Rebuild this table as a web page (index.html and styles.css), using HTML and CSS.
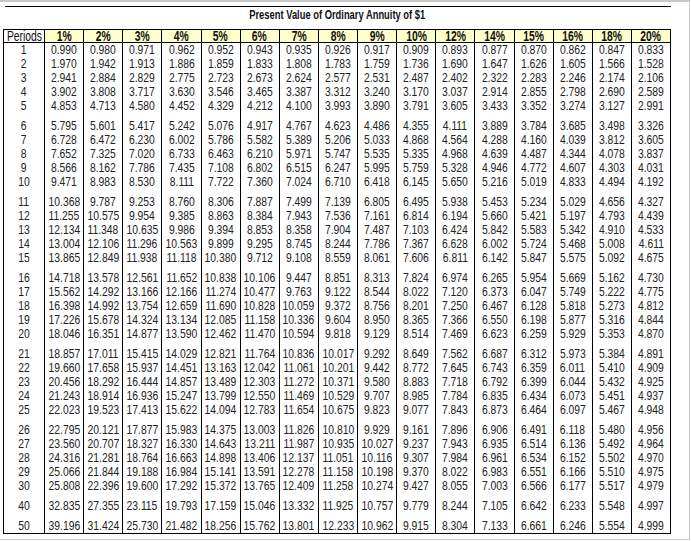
FILE: index.html
```html
<!DOCTYPE html>
<html>
<head>
<meta charset="utf-8">
<link rel="stylesheet" href="styles.css">
</head>
<body>
<div class="frame">
  <div class="rule"></div>
  <div class="title"><span>Present Value of Ordinary Annuity of $1</span></div>
  <table class="pv">
    <colgroup><col class="c-per"><col span="16"></colgroup>
    <thead>
      <tr><th class="per"><span>Periods</span></th><th><span>1%</span></th><th><span>2%</span></th><th><span>3%</span></th><th><span>4%</span></th><th><span>5%</span></th><th><span>6%</span></th><th><span>7%</span></th><th><span>8%</span></th><th><span>9%</span></th><th><span>10%</span></th><th><span>12%</span></th><th><span>14%</span></th><th><span>15%</span></th><th><span>16%</span></th><th><span>18%</span></th><th><span>20%</span></th></tr>
    </thead>
    <tbody>
      <tr><td><span>1</span></td><td><span>0.990</span></td><td><span>0.980</span></td><td><span>0.971</span></td><td><span>0.962</span></td><td><span>0.952</span></td><td><span>0.943</span></td><td><span>0.935</span></td><td><span>0.926</span></td><td><span>0.917</span></td><td><span>0.909</span></td><td><span>0.893</span></td><td><span>0.877</span></td><td><span>0.870</span></td><td><span>0.862</span></td><td><span>0.847</span></td><td><span>0.833</span></td></tr>
      <tr><td><span>2</span></td><td><span>1.970</span></td><td><span>1.942</span></td><td><span>1.913</span></td><td><span>1.886</span></td><td><span>1.859</span></td><td><span>1.833</span></td><td><span>1.808</span></td><td><span>1.783</span></td><td><span>1.759</span></td><td><span>1.736</span></td><td><span>1.690</span></td><td><span>1.647</span></td><td><span>1.626</span></td><td><span>1.605</span></td><td><span>1.566</span></td><td><span>1.528</span></td></tr>
      <tr><td><span>3</span></td><td><span>2.941</span></td><td><span>2.884</span></td><td><span>2.829</span></td><td><span>2.775</span></td><td><span>2.723</span></td><td><span>2.673</span></td><td><span>2.624</span></td><td><span>2.577</span></td><td><span>2.531</span></td><td><span>2.487</span></td><td><span>2.402</span></td><td><span>2.322</span></td><td><span>2.283</span></td><td><span>2.246</span></td><td><span>2.174</span></td><td><span>2.106</span></td></tr>
      <tr><td><span>4</span></td><td><span>3.902</span></td><td><span>3.808</span></td><td><span>3.717</span></td><td><span>3.630</span></td><td><span>3.546</span></td><td><span>3.465</span></td><td><span>3.387</span></td><td><span>3.312</span></td><td><span>3.240</span></td><td><span>3.170</span></td><td><span>3.037</span></td><td><span>2.914</span></td><td><span>2.855</span></td><td><span>2.798</span></td><td><span>2.690</span></td><td><span>2.589</span></td></tr>
      <tr><td><span>5</span></td><td><span>4.853</span></td><td><span>4.713</span></td><td><span>4.580</span></td><td><span>4.452</span></td><td><span>4.329</span></td><td><span>4.212</span></td><td><span>4.100</span></td><td><span>3.993</span></td><td><span>3.890</span></td><td><span>3.791</span></td><td><span>3.605</span></td><td><span>3.433</span></td><td><span>3.352</span></td><td><span>3.274</span></td><td><span>3.127</span></td><td><span>2.991</span></td></tr>
    </tbody>
    <tbody>
      <tr><td><span>6</span></td><td><span>5.795</span></td><td><span>5.601</span></td><td><span>5.417</span></td><td><span>5.242</span></td><td><span>5.076</span></td><td><span>4.917</span></td><td><span>4.767</span></td><td><span>4.623</span></td><td><span>4.486</span></td><td><span>4.355</span></td><td><span>4.111</span></td><td><span>3.889</span></td><td><span>3.784</span></td><td><span>3.685</span></td><td><span>3.498</span></td><td><span>3.326</span></td></tr>
      <tr><td><span>7</span></td><td><span>6.728</span></td><td><span>6.472</span></td><td><span>6.230</span></td><td><span>6.002</span></td><td><span>5.786</span></td><td><span>5.582</span></td><td><span>5.389</span></td><td><span>5.206</span></td><td><span>5.033</span></td><td><span>4.868</span></td><td><span>4.564</span></td><td><span>4.288</span></td><td><span>4.160</span></td><td><span>4.039</span></td><td><span>3.812</span></td><td><span>3.605</span></td></tr>
      <tr><td><span>8</span></td><td><span>7.652</span></td><td><span>7.325</span></td><td><span>7.020</span></td><td><span>6.733</span></td><td><span>6.463</span></td><td><span>6.210</span></td><td><span>5.971</span></td><td><span>5.747</span></td><td><span>5.535</span></td><td><span>5.335</span></td><td><span>4.968</span></td><td><span>4.639</span></td><td><span>4.487</span></td><td><span>4.344</span></td><td><span>4.078</span></td><td><span>3.837</span></td></tr>
      <tr><td><span>9</span></td><td><span>8.566</span></td><td><span>8.162</span></td><td><span>7.786</span></td><td><span>7.435</span></td><td><span>7.108</span></td><td><span>6.802</span></td><td><span>6.515</span></td><td><span>6.247</span></td><td><span>5.995</span></td><td><span>5.759</span></td><td><span>5.328</span></td><td><span>4.946</span></td><td><span>4.772</span></td><td><span>4.607</span></td><td><span>4.303</span></td><td><span>4.031</span></td></tr>
      <tr><td><span>10</span></td><td><span>9.471</span></td><td><span>8.983</span></td><td><span>8.530</span></td><td><span>8.111</span></td><td><span>7.722</span></td><td><span>7.360</span></td><td><span>7.024</span></td><td><span>6.710</span></td><td><span>6.418</span></td><td><span>6.145</span></td><td><span>5.650</span></td><td><span>5.216</span></td><td><span>5.019</span></td><td><span>4.833</span></td><td><span>4.494</span></td><td><span>4.192</span></td></tr>
    </tbody>
    <tbody>
      <tr><td><span>11</span></td><td><span>10.368</span></td><td><span>9.787</span></td><td><span>9.253</span></td><td><span>8.760</span></td><td><span>8.306</span></td><td><span>7.887</span></td><td><span>7.499</span></td><td><span>7.139</span></td><td><span>6.805</span></td><td><span>6.495</span></td><td><span>5.938</span></td><td><span>5.453</span></td><td><span>5.234</span></td><td><span>5.029</span></td><td><span>4.656</span></td><td><span>4.327</span></td></tr>
      <tr><td><span>12</span></td><td><span>11.255</span></td><td><span>10.575</span></td><td><span>9.954</span></td><td><span>9.385</span></td><td><span>8.863</span></td><td><span>8.384</span></td><td><span>7.943</span></td><td><span>7.536</span></td><td><span>7.161</span></td><td><span>6.814</span></td><td><span>6.194</span></td><td><span>5.660</span></td><td><span>5.421</span></td><td><span>5.197</span></td><td><span>4.793</span></td><td><span>4.439</span></td></tr>
      <tr><td><span>13</span></td><td><span>12.134</span></td><td><span>11.348</span></td><td><span>10.635</span></td><td><span>9.986</span></td><td><span>9.394</span></td><td><span>8.853</span></td><td><span>8.358</span></td><td><span>7.904</span></td><td><span>7.487</span></td><td><span>7.103</span></td><td><span>6.424</span></td><td><span>5.842</span></td><td><span>5.583</span></td><td><span>5.342</span></td><td><span>4.910</span></td><td><span>4.533</span></td></tr>
      <tr><td><span>14</span></td><td><span>13.004</span></td><td><span>12.106</span></td><td><span>11.296</span></td><td><span>10.563</span></td><td><span>9.899</span></td><td><span>9.295</span></td><td><span>8.745</span></td><td><span>8.244</span></td><td><span>7.786</span></td><td><span>7.367</span></td><td><span>6.628</span></td><td><span>6.002</span></td><td><span>5.724</span></td><td><span>5.468</span></td><td><span>5.008</span></td><td><span>4.611</span></td></tr>
      <tr><td><span>15</span></td><td><span>13.865</span></td><td><span>12.849</span></td><td><span>11.938</span></td><td><span>11.118</span></td><td><span>10.380</span></td><td><span>9.712</span></td><td><span>9.108</span></td><td><span>8.559</span></td><td><span>8.061</span></td><td><span>7.606</span></td><td><span>6.811</span></td><td><span>6.142</span></td><td><span>5.847</span></td><td><span>5.575</span></td><td><span>5.092</span></td><td><span>4.675</span></td></tr>
    </tbody>
    <tbody>
      <tr><td><span>16</span></td><td><span>14.718</span></td><td><span>13.578</span></td><td><span>12.561</span></td><td><span>11.652</span></td><td><span>10.838</span></td><td><span>10.106</span></td><td><span>9.447</span></td><td><span>8.851</span></td><td><span>8.313</span></td><td><span>7.824</span></td><td><span>6.974</span></td><td><span>6.265</span></td><td><span>5.954</span></td><td><span>5.669</span></td><td><span>5.162</span></td><td><span>4.730</span></td></tr>
      <tr><td><span>17</span></td><td><span>15.562</span></td><td><span>14.292</span></td><td><span>13.166</span></td><td><span>12.166</span></td><td><span>11.274</span></td><td><span>10.477</span></td><td><span>9.763</span></td><td><span>9.122</span></td><td><span>8.544</span></td><td><span>8.022</span></td><td><span>7.120</span></td><td><span>6.373</span></td><td><span>6.047</span></td><td><span>5.749</span></td><td><span>5.222</span></td><td><span>4.775</span></td></tr>
      <tr><td><span>18</span></td><td><span>16.398</span></td><td><span>14.992</span></td><td><span>13.754</span></td><td><span>12.659</span></td><td><span>11.690</span></td><td><span>10.828</span></td><td><span>10.059</span></td><td><span>9.372</span></td><td><span>8.756</span></td><td><span>8.201</span></td><td><span>7.250</span></td><td><span>6.467</span></td><td><span>6.128</span></td><td><span>5.818</span></td><td><span>5.273</span></td><td><span>4.812</span></td></tr>
      <tr><td><span>19</span></td><td><span>17.226</span></td><td><span>15.678</span></td><td><span>14.324</span></td><td><span>13.134</span></td><td><span>12.085</span></td><td><span>11.158</span></td><td><span>10.336</span></td><td><span>9.604</span></td><td><span>8.950</span></td><td><span>8.365</span></td><td><span>7.366</span></td><td><span>6.550</span></td><td><span>6.198</span></td><td><span>5.877</span></td><td><span>5.316</span></td><td><span>4.844</span></td></tr>
      <tr><td><span>20</span></td><td><span>18.046</span></td><td><span>16.351</span></td><td><span>14.877</span></td><td><span>13.590</span></td><td><span>12.462</span></td><td><span>11.470</span></td><td><span>10.594</span></td><td><span>9.818</span></td><td><span>9.129</span></td><td><span>8.514</span></td><td><span>7.469</span></td><td><span>6.623</span></td><td><span>6.259</span></td><td><span>5.929</span></td><td><span>5.353</span></td><td><span>4.870</span></td></tr>
    </tbody>
    <tbody>
      <tr><td><span>21</span></td><td><span>18.857</span></td><td><span>17.011</span></td><td><span>15.415</span></td><td><span>14.029</span></td><td><span>12.821</span></td><td><span>11.764</span></td><td><span>10.836</span></td><td><span>10.017</span></td><td><span>9.292</span></td><td><span>8.649</span></td><td><span>7.562</span></td><td><span>6.687</span></td><td><span>6.312</span></td><td><span>5.973</span></td><td><span>5.384</span></td><td><span>4.891</span></td></tr>
      <tr><td><span>22</span></td><td><span>19.660</span></td><td><span>17.658</span></td><td><span>15.937</span></td><td><span>14.451</span></td><td><span>13.163</span></td><td><span>12.042</span></td><td><span>11.061</span></td><td><span>10.201</span></td><td><span>9.442</span></td><td><span>8.772</span></td><td><span>7.645</span></td><td><span>6.743</span></td><td><span>6.359</span></td><td><span>6.011</span></td><td><span>5.410</span></td><td><span>4.909</span></td></tr>
      <tr><td><span>23</span></td><td><span>20.456</span></td><td><span>18.292</span></td><td><span>16.444</span></td><td><span>14.857</span></td><td><span>13.489</span></td><td><span>12.303</span></td><td><span>11.272</span></td><td><span>10.371</span></td><td><span>9.580</span></td><td><span>8.883</span></td><td><span>7.718</span></td><td><span>6.792</span></td><td><span>6.399</span></td><td><span>6.044</span></td><td><span>5.432</span></td><td><span>4.925</span></td></tr>
      <tr><td><span>24</span></td><td><span>21.243</span></td><td><span>18.914</span></td><td><span>16.936</span></td><td><span>15.247</span></td><td><span>13.799</span></td><td><span>12.550</span></td><td><span>11.469</span></td><td><span>10.529</span></td><td><span>9.707</span></td><td><span>8.985</span></td><td><span>7.784</span></td><td><span>6.835</span></td><td><span>6.434</span></td><td><span>6.073</span></td><td><span>5.451</span></td><td><span>4.937</span></td></tr>
      <tr><td><span>25</span></td><td><span>22.023</span></td><td><span>19.523</span></td><td><span>17.413</span></td><td><span>15.622</span></td><td><span>14.094</span></td><td><span>12.783</span></td><td><span>11.654</span></td><td><span>10.675</span></td><td><span>9.823</span></td><td><span>9.077</span></td><td><span>7.843</span></td><td><span>6.873</span></td><td><span>6.464</span></td><td><span>6.097</span></td><td><span>5.467</span></td><td><span>4.948</span></td></tr>
    </tbody>
    <tbody>
      <tr><td><span>26</span></td><td><span>22.795</span></td><td><span>20.121</span></td><td><span>17.877</span></td><td><span>15.983</span></td><td><span>14.375</span></td><td><span>13.003</span></td><td><span>11.826</span></td><td><span>10.810</span></td><td><span>9.929</span></td><td><span>9.161</span></td><td><span>7.896</span></td><td><span>6.906</span></td><td><span>6.491</span></td><td><span>6.118</span></td><td><span>5.480</span></td><td><span>4.956</span></td></tr>
      <tr><td><span>27</span></td><td><span>23.560</span></td><td><span>20.707</span></td><td><span>18.327</span></td><td><span>16.330</span></td><td><span>14.643</span></td><td><span>13.211</span></td><td><span>11.987</span></td><td><span>10.935</span></td><td><span>10.027</span></td><td><span>9.237</span></td><td><span>7.943</span></td><td><span>6.935</span></td><td><span>6.514</span></td><td><span>6.136</span></td><td><span>5.492</span></td><td><span>4.964</span></td></tr>
      <tr><td><span>28</span></td><td><span>24.316</span></td><td><span>21.281</span></td><td><span>18.764</span></td><td><span>16.663</span></td><td><span>14.898</span></td><td><span>13.406</span></td><td><span>12.137</span></td><td><span>11.051</span></td><td><span>10.116</span></td><td><span>9.307</span></td><td><span>7.984</span></td><td><span>6.961</span></td><td><span>6.534</span></td><td><span>6.152</span></td><td><span>5.502</span></td><td><span>4.970</span></td></tr>
      <tr><td><span>29</span></td><td><span>25.066</span></td><td><span>21.844</span></td><td><span>19.188</span></td><td><span>16.984</span></td><td><span>15.141</span></td><td><span>13.591</span></td><td><span>12.278</span></td><td><span>11.158</span></td><td><span>10.198</span></td><td><span>9.370</span></td><td><span>8.022</span></td><td><span>6.983</span></td><td><span>6.551</span></td><td><span>6.166</span></td><td><span>5.510</span></td><td><span>4.975</span></td></tr>
      <tr><td><span>30</span></td><td><span>25.808</span></td><td><span>22.396</span></td><td><span>19.600</span></td><td><span>17.292</span></td><td><span>15.372</span></td><td><span>13.765</span></td><td><span>12.409</span></td><td><span>11.258</span></td><td><span>10.274</span></td><td><span>9.427</span></td><td><span>8.055</span></td><td><span>7.003</span></td><td><span>6.566</span></td><td><span>6.177</span></td><td><span>5.517</span></td><td><span>4.979</span></td></tr>
    </tbody>
    <tbody>
      <tr><td><span>40</span></td><td><span>32.835</span></td><td><span>27.355</span></td><td><span>23.115</span></td><td><span>19.793</span></td><td><span>17.159</span></td><td><span>15.046</span></td><td><span>13.332</span></td><td><span>11.925</span></td><td><span>10.757</span></td><td><span>9.779</span></td><td><span>8.244</span></td><td><span>7.105</span></td><td><span>6.642</span></td><td><span>6.233</span></td><td><span>5.548</span></td><td><span>4.997</span></td></tr>
    </tbody>
    <tbody>
      <tr><td><span>50</span></td><td><span>39.196</span></td><td><span>31.424</span></td><td><span>25.730</span></td><td><span>21.482</span></td><td><span>18.256</span></td><td><span>15.762</span></td><td><span>13.801</span></td><td><span>12.233</span></td><td><span>10.962</span></td><td><span>9.915</span></td><td><span>8.304</span></td><td><span>7.133</span></td><td><span>6.661</span></td><td><span>6.246</span></td><td><span>5.554</span></td><td><span>4.999</span></td></tr>
    </tbody>
  </table>
</div>
</body>
</html>
```

FILE: styles.css
```css
html, body {
  margin: 0;
  padding: 0;
  background: #ffffff;
}

.frame {
  box-sizing: border-box;
  width: 690px;
  height: 540px;
  border-top: 2px solid #c8c8c8;
  border-right: 1px solid #c8c8c8;
  border-bottom: 1px solid #c8c8c8;
  padding: 4px 0 0 3px;
  font-family: "Liberation Sans", Arial, sans-serif;
  color: #222;
}

.rule {
  margin-left: 2px;
  width: 666px;
  height: 1px;
  background: #000;
}

.title {
  width: 668px;
  text-align: center;
  font-weight: bold;
  font-size: 13px;
  line-height: 15px;
  color: #111;
}

.title span {
  display: inline-block;
  transform: scaleX(0.72);
  margin: 0 -40px;
}

.pv {
  margin-top: 7px;
  width: 668px;
  table-layout: fixed;
  border-collapse: collapse;
  border: 1px solid #000;
}

.pv .c-per {
  width: 41px;
}

.pv th {
  padding: 0;
  height: 12px;
  line-height: 12px;
  font-size: 11.5px;
  font-weight: bold;
  text-align: center;
  background: #ffffcc;
  border: 1px solid #000;
  white-space: nowrap;
  color: #111;
}

.pv th.per {
  background: #fff;
  font-weight: normal;
}

.pv td {
  padding: 0;
  height: 14px;
  line-height: 14px;
  font-size: 12.7px;
  text-align: center;
  border-left: 1px solid #000;
  border-right: 1px solid #000;
  white-space: nowrap;
}

.pv th span {
  display: inline-block;
  transform: scale(0.9, 1.2);
  margin: 0 -12px;
}

.pv td span {
  display: inline-block;
  transform: scaleX(0.816);
  margin: 0 -12px;
}

.pv tbody + tbody tr:first-child td {
  padding-top: 6px;
}
```
